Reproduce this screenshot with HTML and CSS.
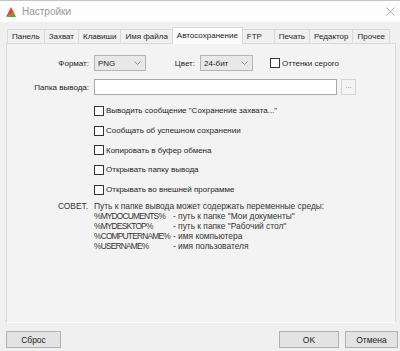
FILE: index.html
```html
<!DOCTYPE html>
<html lang="ru">
<head>
<meta charset="UTF-8">
<meta name="viewport" content="width=device-width, initial-scale=1.0">
<title>Настройки</title>
<link rel="stylesheet" href="styles.css">
</head>
<body>

<div class="window">
    <div class="titlebar">
        <svg class="app-icon" width="12" height="12" viewBox="0 0 12 12">
            <path d="M1 11 L6 1 L9 7 Z" fill="#e8452c"/>
            <path d="M6 1 L11 9 L9 7 Z" fill="#f2a23a"/>
            <path d="M1 11 L9 7 L11 11 Z" fill="#4ea44a"/>
        </svg>
        <span class="title">Настройки</span>
        <svg class="close" width="9" height="9" viewBox="0 0 9 9">
            <path d="M0.5 0.5 L8.5 8.5 M8.5 0.5 L0.5 8.5" stroke="#9a9a9a" stroke-width="0.8" fill="none"/>
        </svg>
    </div>

    <div class="tabs">
        <span class="tab">Панель</span>
        <span class="tab">Захват</span>
        <span class="tab">Клавиши</span>
        <span class="tab">Имя файла</span>
        <span class="tab active">Автосохранение</span>
        <span class="tab tab-ftp">FTP</span>
        <span class="tab">Печать</span>
        <span class="tab">Редактор</span>
        <span class="tab">Прочее</span>
    </div>

    <div class="panel">
        <div class="row">
            <span class="field-label">Формат:</span>
            <div class="select select-format">
                <span>PNG</span>
                <svg width="7" height="4" viewBox="0 0 7 4"><path d="M0.5 0.5 L3.5 3.5 L6.5 0.5" stroke="#777" stroke-width="0.8" fill="none"/></svg>
            </div>
            <span class="field-label label-color">Цвет:</span>
            <div class="select select-color">
                <span>24-бит</span>
                <svg width="7" height="4" viewBox="0 0 7 4"><path d="M0.5 0.5 L3.5 3.5 L6.5 0.5" stroke="#777" stroke-width="0.8" fill="none"/></svg>
            </div>
            <label class="check check-gray"><span class="box"></span>Оттенки серого</label>
        </div>

        <div class="row row-folder">
            <span class="field-label">Папка вывода:</span>
            <div class="input"></div>
            <span class="browse">...</span>
        </div>

        <ul class="checks">
            <li class="check"><span class="box"></span>Выводить сообщение "Сохранение захвата..."</li>
            <li class="check"><span class="box"></span>Сообщать об успешном сохранении</li>
            <li class="check"><span class="box"></span>Копировать в буфер обмена</li>
            <li class="check"><span class="box"></span>Открывать папку вывода</li>
            <li class="check"><span class="box"></span>Открывать во внешней программе</li>
        </ul>

        <div class="tip">
            <span class="tip-head">СОВЕТ.</span>
            <div class="tip-body">
                <p>Путь к папке вывода может содержать переменные среды:</p>
                <div class="vars">
                    <span class="var">%MYDOCUMENTS%</span><span>- путь к папке "Мои документы"</span>
                    <span class="var">%MYDESKTOP%</span><span>- путь к папке "Рабочий стол"</span>
                    <span class="var">%COMPUTERNAME%</span><span>- имя компьютера</span>
                    <span class="var">%USERNAME%</span><span>- имя пользователя</span>
                </div>
            </div>
        </div>
    </div>

    <div class="buttons">
        <button class="btn btn-reset">Сброс</button>
        <button class="btn btn-ok">OK</button>
        <button class="btn btn-cancel">Отмена</button>
    </div>
</div>

</body>
</html>
```

FILE: styles.css
```css
* {
    box-sizing: border-box;
}

body {
    margin: 0;
    background: #f0f0f0;
    font-family: "Liberation Sans", Arial, sans-serif;
    font-size: 8px;
    color: #1e1e1e;
}

.window {
    width: 400px;
    height: 351px;
    background: #f0f0f0;
    padding-left: 2px;
}

.titlebar {
    height: 22px;
    margin-left: -2px;
    background: #fdfdfd;
    border-top: 1px solid #c4c4c4;
    display: flex;
    align-items: center;
    padding: 0 5px 0 5px;
}

.app-icon {
    margin-right: 5px;
}

.title {
    font-size: 10px;
    color: #9a9a9a;
}

.close {
    margin-left: auto;
}

/* tab strip */
.tabs {
    display: flex;
    align-items: flex-end;
    height: 16px;
    margin-top: 5px;
    padding-left: 5px;
}

.tab {
    height: 14px;
    line-height: 13px;
    padding: 0 4px;
    border: 1px solid #d9d9d9;
    border-bottom: none;
    margin-right: -1px;
    background: #f0f0f0;
    white-space: nowrap;
}

.tab-ftp {
    min-width: 33px;
}

.tab.active {
    height: 17px;
    margin-bottom: -1px;
    line-height: 16px;
    background: #fbfbfb;
    position: relative;
    z-index: 1;
}

/* tab page */
.panel {
    margin: 0 4px;
    height: 280px;
    border: 1px solid #d9d9d9;
    border-bottom-color: #fcfcfc;
    background: #f3f3f3;
    padding-top: 11px;
}

.row {
    display: flex;
    align-items: center;
    height: 16px;
}

.row-folder {
    margin-top: 8px;
}

.field-label {
    width: 82px;
    margin-right: 5px;
    text-align: right;
}

.label-color {
    width: 49px;
}

.select {
    height: 16px;
    border: 1px solid #b4b4b4;
    background: #e8e8e8;
    display: flex;
    align-items: center;
    justify-content: space-between;
    padding: 0 4px 0 3px;
}

.select-format {
    width: 52px;
}

.select-color {
    width: 53px;
}

.check {
    display: flex;
    align-items: center;
}

.check .box {
    width: 10px;
    height: 10px;
    border: 1px solid #333;
    background: #fff;
    margin-right: 2px;
}

.check-gray {
    margin-left: 17px;
}

.input {
    width: 243px;
    height: 16px;
    border: 1px solid #a8a8a8;
    background: #fff;
}

.browse {
    width: 15px;
    height: 16px;
    margin-left: 4px;
    border: 1px solid #d4d4d4;
    background: #f4f4f4;
    color: #999;
    text-align: center;
    line-height: 12px;
}

.checks {
    list-style: none;
    margin: 6px 0 0 87px;
    padding: 0;
}

.checks .check {
    height: 19.7px;
}

.tip {
    display: flex;
    margin-top: 2px;
    font-size: 8.4px;
    line-height: 10px;
    color: #333;
}

.tip-head {
    width: 87px;
    padding-right: 6px;
    text-align: right;
}

.tip-body p {
    margin: 0;
}

.vars {
    display: grid;
    grid-template-columns: 79px auto;
}

.var {
    letter-spacing: -0.8px;
}

/* bottom buttons */
.buttons {
    display: flex;
    margin-top: 8px;
    padding: 0 2px 0 4px;
}

.btn {
    height: 17px;
    padding: 0;
    border: 1px solid #b0b0b0;
    background: #e3e3e3;
    font-family: inherit;
    font-size: 8.5px;
    color: #222;
}

.btn-reset {
    width: 55px;
}

.btn-ok {
    width: 60px;
    margin-left: auto;
}

.btn-cancel {
    width: 53px;
    margin-left: 6px;
}
```
